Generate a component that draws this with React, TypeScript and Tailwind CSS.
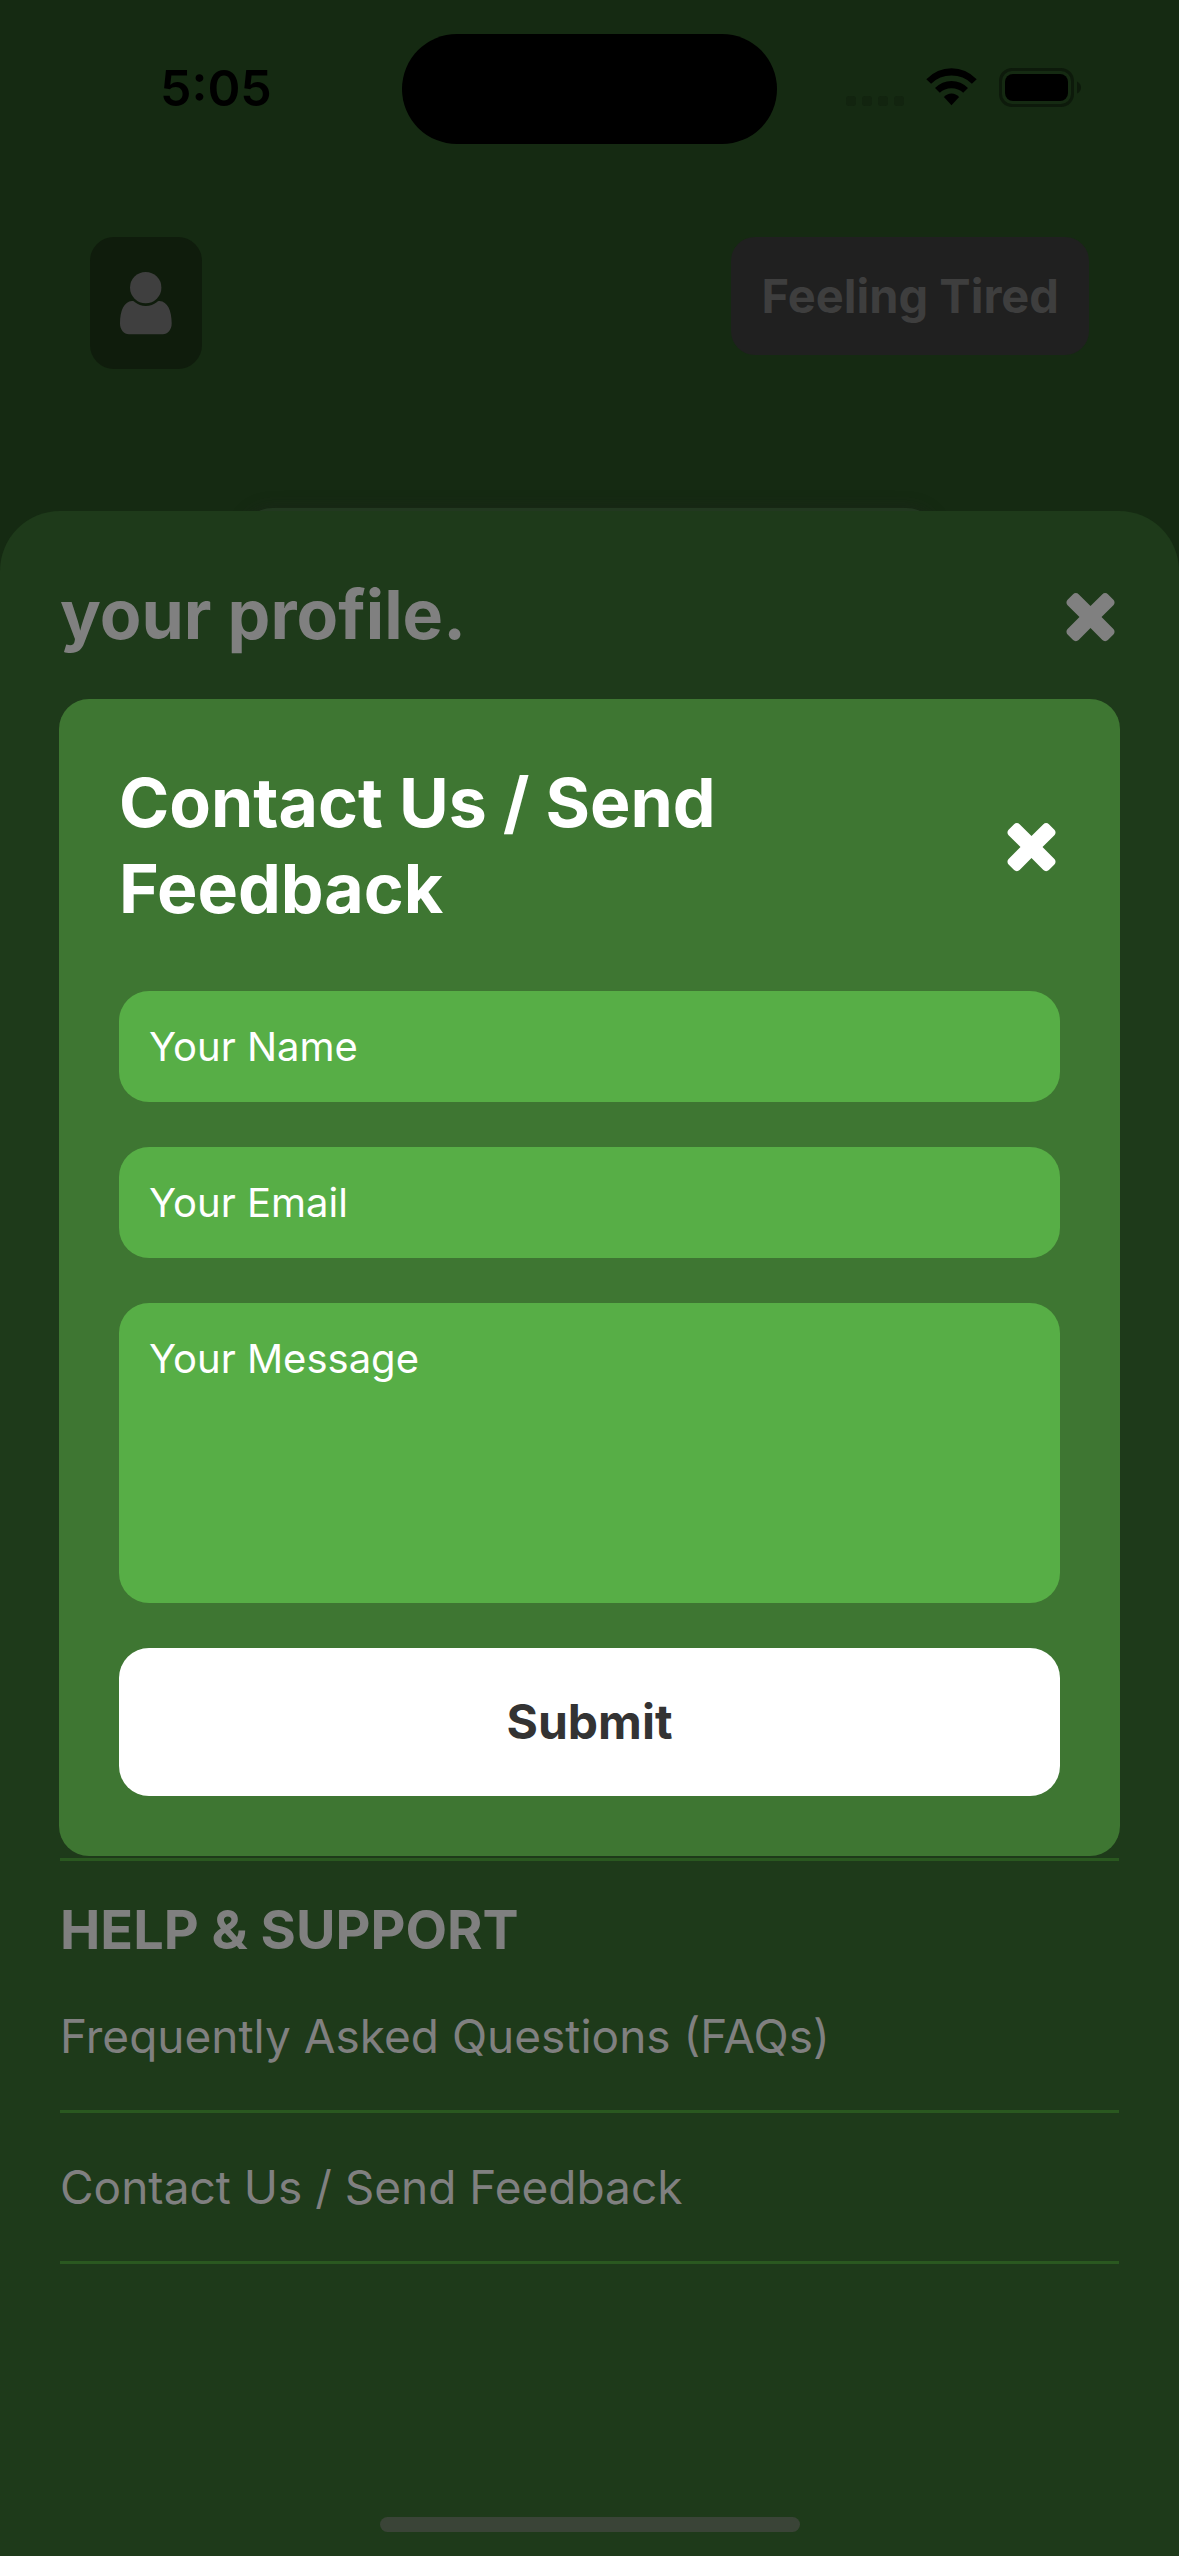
import React from "react";

function CloseIcon() {
  return (
    <svg className="size-[57px] shrink-0" viewBox="192 192 1408 1408" fill="currentColor" aria-hidden="true">
      <path d="M1490 1322q0 40-28 68l-136 136q-28 28-68 28t-68-28l-294-294-294 294q-28 28-68 28t-68-28l-136-136q-28-28-28-68t28-68l294-294-294-294q-28-28-28-68t28-68l136-136q28-28 68-28t68 28l294 294 294-294q28-28 68-28t68 28l136 136q28 28 28 68t-28 68l-294 294 294 294q28 28 28 68z" />
    </svg>
  );
}

function UserIcon() {
  return (
    <svg className="h-[72px] w-[52px]" viewBox="0 0 52 72" fill="currentColor" aria-hidden="true">
      <circle cx="25.7" cy="20.6" r="15.7" />
      <path d="M12 34C13.500 34 14.200 34.500 15 35.200C18 37.600 21.500 38.900 25.800 38.900C30.100 38.900 33.700 37.600 36.700 35.200C37.500 34.500 38.200 34 39.600 34C47.500 34.600 51.700 43.500 51.700 56.500C51.700 62.600 47.800 67.200 42.700 67.200H9C3.900 67.200 0 62.600 0 56.500C0 43.500 4.100 34.600 12 34Z" />
    </svg>
  );
}

function WifiIcon() {
  return (
    <svg className="h-[38px] w-[51px]" viewBox="0 0 51 38" aria-hidden="true">
      <path d="M0.300 11.200Q11 0.200 25.500 0.200T50.700 11.200L45.900 15.800Q37.500 7.600 25.500 7.600T5.100 15.800Z" />
      <path d="M9 20.100Q16 13 25.500 13T42 20.100L37.200 24.800Q32.500 20.300 25.500 20.300T13.800 24.800Z" />
      <path d="M17.900 29.100Q21 25.600 25.500 25.600T33.100 29.100L25.500 37.200Z" />
    </svg>
  );
}

function BatteryIcon() {
  return (
    <svg className="h-[39px] w-[82px]" viewBox="0 0 82 39" aria-hidden="true">
      <rect x="1.500" y="1.500" width="72" height="36" rx="11.500" fill="none" stroke="#0d1a0b" strokeWidth="3" />
      <rect x="6" y="6" width="63" height="27" rx="8" />
      <path d="M78 13.500Q82 15.500 82 19.500T78 25.500Z" fill="#0d1a0b" />
    </svg>
  );
}

function StatusBar() {
  return (
    <div className="grid h-[177px] grid-cols-[1fr_375px_1fr] items-start pt-[34px] text-black">
      <div className="flex h-[110px] items-center pb-[2px] pl-[160px] text-[50px] leading-[60px] font-semibold">5:05</div>
      <div className="h-[110px] rounded-full bg-black" />
      <div className="flex h-[110px] items-center justify-end gap-[22px] pr-[98px] pb-[4px]">
        <div className="flex h-[38px] items-end gap-[6px]">
          {[0, 1, 2, 3].map((dot) => (
            <span key={dot} className="size-[10px] rounded-[3px] bg-[#12240f]" />
          ))}
        </div>
        <WifiIcon />
        <BatteryIcon />
      </div>
    </div>
  );
}

const helpLinks = ["Frequently Asked Questions (FAQs)", "Contact Us / Send Feedback"];

const fieldClass =
  "block w-full resize-none rounded-[30px] bg-[#57ae46] px-[30px] py-[30px] text-[40px] leading-[51px] text-white outline-none placeholder:text-white placeholder:opacity-100";

function ContactDialog() {
  return (
    <div className="absolute inset-0 flex items-center justify-center pb-[2px]">
      <section
        role="dialog"
        aria-modal="true"
        aria-labelledby="contact-title"
        className="w-[90%] rounded-[30px] bg-[#3e7632] p-[60px] text-white"
      >
        <header className="mb-[60px] flex items-center justify-between gap-[60px]">
          <h2 id="contact-title" className="max-w-[700px] text-[68px] leading-[86px] font-bold">
            Contact Us / Send Feedback
          </h2>
          <button type="button" aria-label="Close contact form">
            <CloseIcon />
          </button>
        </header>
        <form className="flex flex-col gap-[45px]" onSubmit={(event) => event.preventDefault()}>
          <input className={fieldClass} type="text" aria-label="Your Name" placeholder="Your Name" />
          <input className={fieldClass} type="email" aria-label="Your Email" placeholder="Your Email" />
          <textarea className={`${fieldClass} h-[300px]`} aria-label="Your Message" placeholder="Your Message" />
          <button
            type="submit"
            className="rounded-[30px] bg-white py-[45px] text-[48px] leading-[58px] font-bold text-[#333333]"
          >
            Submit
          </button>
        </form>
      </section>
    </div>
  );
}

export default function App() {
  return (
    <div className="relative flex min-h-screen flex-col bg-[#152a12] font-['Inter',sans-serif]">
      <StatusBar />
      <div className="flex items-start justify-between px-[90px] pt-[60px]">
        <button type="button" aria-label="Profile" className="rounded-[24px] bg-[#0f1c0c] p-[30px] text-[#3f3f3f]">
          <UserIcon />
        </button>
        <button
          type="button"
          className="rounded-[24px] bg-[#202020] px-[30px] py-[30px] text-[47px] leading-[58px] font-bold text-[#3e3e3e]"
        >
          Feeling Tired
        </button>
      </div>
      <div className="mx-auto mt-[139px] h-[60px] w-[59%] rounded-t-[30px] border-t-[3px] border-[#223820] bg-[#1e3a1a] shadow-[0_0_16px_rgba(32,32,32,0.4)]" />
      <main className="relative -mt-[57px] flex grow flex-col justify-between rounded-t-[60px] bg-[#1e3a1a] px-[60px] pt-[60px] text-[#808080]">
        <header className="flex items-center justify-between">
          <h1 className="text-[68px] leading-[86px] font-bold">your profile.</h1>
          <button type="button" aria-label="Close profile">
            <CloseIcon />
          </button>
        </header>
        <section className="border-t-[3px] border-[#2a5820] pt-[36px] pb-[292px]">
          <h2 className="text-[54px] leading-[65px] font-bold">HELP &amp; SUPPORT</h2>
          <ul>
            {helpLinks.map((label) => (
              <li key={label} className="border-b-[3px] border-[#2a5820] py-[45px] text-[46px] leading-[58px]">
                <a href="#">{label}</a>
              </li>
            ))}
          </ul>
        </section>
      </main>
      <ContactDialog />
      <div className="absolute bottom-[24px] left-1/2 h-[15px] w-[420px] -translate-x-1/2 rounded-full bg-[#3a4437]" />
    </div>
  );
}
